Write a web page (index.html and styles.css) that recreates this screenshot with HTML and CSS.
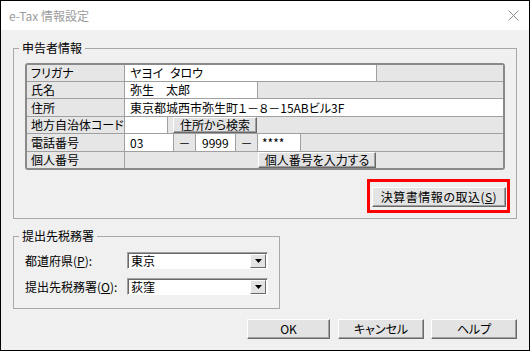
FILE: index.html
```html
<!DOCTYPE html>
<html lang="ja">
<head>
<meta charset="utf-8">
<title>e-Tax 情報設定</title>
<link rel="stylesheet" href="styles.css">
</head>
<body>
<div class="window">
  <div class="titlebar">
    <span class="title">e-Tax 情報設定</span>
    <svg class="close" width="11" height="11" viewBox="0 0 11 11"><path d="M0.5 0.5L10.5 10.5M10.5 0.5L0.5 10.5" stroke="#8a8a8a" stroke-width="1" fill="none"/></svg>
  </div>
  <div class="client">
    <fieldset class="group g1">
      <legend>申告者情報</legend>
      <div class="g1body">
        <div class="grid">
          <div class="row h16">
            <div class="lbl">フリガナ</div>
            <div class="cell white w251 sep kana">ヤヨイ タロウ</div>
            <div class="cell gray fill"></div>
          </div>
          <div class="row h16">
            <div class="lbl">氏名</div>
            <div class="cell white w132 sep">弥生　太郎</div>
            <div class="cell gray fill"></div>
          </div>
          <div class="row h17">
            <div class="lbl">住所</div>
            <div class="cell white fill">東京都城西市弥生町１－８－15ABビル3F</div>
          </div>
          <div class="row h16">
            <div class="lbl">地方自治体コード</div>
            <div class="cell white w42 sep"></div>
            <div class="cell gray w5"></div>
            <div class="btn cellbtn w84">住所から検索</div>
            <div class="cell gray fill"></div>
          </div>
          <div class="row h17">
            <div class="lbl">電話番号</div>
            <div class="cell white w48 sep">03</div>
            <div class="cell gray w21 sep dash">－</div>
            <div class="cell white w39 sep num">9999</div>
            <div class="cell gray w21 sep dash">－</div>
            <div class="cell white w42 sep star">****</div>
            <div class="cell gray fill"></div>
          </div>
          <div class="row h16 last">
            <div class="lbl">個人番号</div>
            <div class="cell gray w133"></div>
            <div class="btn cellbtn w118">個人番号を入力する</div>
            <div class="cell gray fill"></div>
          </div>
        </div>
        <div class="importrow">
          <div class="highlight">
            <div class="btn importbtn">決算書情報の取込(<u>S</u>)</div>
          </div>
        </div>
      </div>
    </fieldset>

    <fieldset class="group g2">
      <legend>提出先税務署</legend>
      <div class="g2body">
        <div class="field">
          <span class="flabel">都道府県(<u>P</u>):</span>
          <div class="combo">
            <span class="cval">東京</span>
            <span class="drop"><svg width="7" height="4" viewBox="0 0 7 4"><path d="M0 0H7L3.5 4Z" fill="#000"/></svg></span>
          </div>
        </div>
        <div class="field">
          <span class="flabel">提出先税務署(<u>O</u>):</span>
          <div class="combo">
            <span class="cval">荻窪</span>
            <span class="drop"><svg width="7" height="4" viewBox="0 0 7 4"><path d="M0 0H7L3.5 4Z" fill="#000"/></svg></span>
          </div>
        </div>
      </div>
    </fieldset>

    <div class="actions">
      <div class="btn act w83">OK</div>
      <div class="btn act w86 gap8">キャンセル</div>
      <div class="btn act w86 gap7">ヘルプ</div>
    </div>
  </div>
</div>
</body>
</html>
```
FILE: styles.css
```css
* { box-sizing: border-box; }
html, body { margin: 0; padding: 0; }
body {
  font-family: "Noto Sans CJK JP", "Noto Sans", sans-serif;
  font-size: 12px;
  color: #000;
  background: #fff;
  font-feature-settings: "palt";
}
u { text-decoration: underline; text-underline-offset: 1px; }

.window {
  width: 530px;
  height: 351px;
  border: 1px solid #000;
  background: #f0f0f0;
  display: flex;
  flex-direction: column;
}
.titlebar {
  height: 29px;
  flex: none;
  background: #fff;
  display: flex;
  align-items: center;
  justify-content: space-between;
  padding: 0 10px 0 8px;
}
.title { color: #9c9c9c; font-size: 12px; line-height: 14px; font-feature-settings: normal; }
.close { display: block; }

.client {
  flex: 1;
  padding: 11px 12px 0;
  display: flex;
  flex-direction: column;
}

.group {
  margin: 0;
  padding: 0;
  border: 1px solid #a8a8a8;
  min-width: 0;
}
.group legend {
  margin-left: 5px;
  padding: 0 3px;
  height: 14px;
  line-height: 14px;
}

.g1body { padding: 8px 11px 5px; }

.grid {
  border: 2px solid #8a8a8a;
  border-radius: 3px;
  background: #e6e6e6;
  overflow: hidden;
}
.row {
  display: flex;
  border-bottom: 1px solid #a0a0a0;
}
.row.last { border-bottom: none; }
.h16 { height: 17px; line-height: 16px; }
.h17 { height: 18px; line-height: 17px; }
.row.last.h16 { height: 16px; }

.lbl {
  width: 98px;
  flex: none;
  padding-left: 4px;
  border-right: 1px solid #a0a0a0;
  background: #e6e6e6;
  white-space: nowrap;
  overflow: hidden;
}
.cell { flex: none; white-space: pre; overflow: hidden; }
.white { background: #fff; padding-left: 5px; }
.gray { background: #e6e6e6; }
.sep { border-right: 1px solid #a0a0a0; }
.fill { flex: 1; }
.dash { text-align: center; }
.num { padding-left: 6px; }
.star { padding-left: 4px; }
.kana { word-spacing: 4px; }

.w251 { width: 252px; }
.w132 { width: 133px; }
.w42 { width: 43px; }
.w5 { width: 5px; }
.w84 { width: 84px; }
.w48 { width: 49px; }
.w21 { width: 22px; }
.w39 { width: 40px; }
.w133 { width: 133px; }
.w118 { width: 118px; }
.w83 { width: 83px; }
.w86 { width: 86px; }

.btn {
  background: #e3e3e3;
  border: 1px solid;
  border-color: #fff #696969 #696969 #fff;
  box-shadow: inset -1px -1px #a0a0a0;
  text-align: center;
  white-space: nowrap;
  flex: none;
}
.cellbtn { line-height: 13px; font-size: 12px; }

.importrow {
  display: flex;
  justify-content: flex-end;
  margin-top: 9px;
  margin-right: -5px;
}
.highlight {
  border: 3px solid #ff0000;
  padding: 5px 1px 3px 2px;
}
.importbtn {
  width: 134px;
  height: 20px;
  line-height: 17px;
  letter-spacing: 0.5px;
}

.g2 { width: 267px; margin-top: 10px; }
.g2body {
  padding: 9px 11px 13px;
  display: flex;
  flex-direction: column;
  gap: 9px;
}
.field { display: flex; align-items: center; }
.flabel { width: 102px; flex: none; }
.combo {
  width: 141px;
  height: 17px;
  display: flex;
  background: #fff;
  border: 1px solid;
  border-color: #a0a0a0 #fff #fff #a0a0a0;
  box-shadow: inset 1px 1px #696969;
}
.cval { flex: 1; padding-left: 3px; padding-top: 1px; line-height: 14px; }
.drop {
  width: 16px;
  margin: 1px 1px 0 0;
  height: 14px;
  background: #e3e3e3;
  border: 1px solid;
  border-color: #fff #696969 #696969 #fff;
  display: flex;
  align-items: center;
  justify-content: center;
}
.drop svg { display: block; }

.actions {
  display: flex;
  justify-content: flex-end;
  margin-top: 10px;
}
.act { height: 20px; line-height: 17px; }
.gap8 { margin-left: 8px; }
.gap7 { margin-left: 7px; }
```
